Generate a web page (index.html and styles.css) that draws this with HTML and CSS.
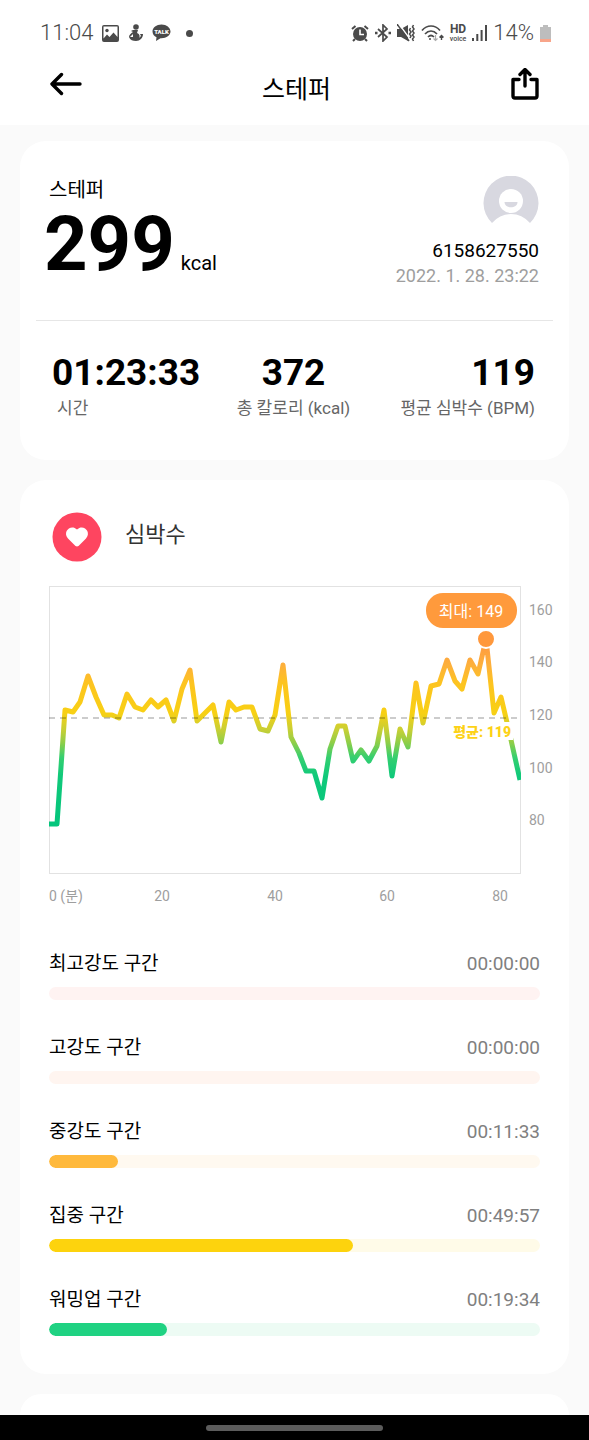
FILE: index.html
```html
<!DOCTYPE html>
<html lang="ko">
<head>
    <meta charset="UTF-8">
    <meta name="viewport" content="width=device-width, initial-scale=1.0">
    <title>스테퍼</title>
    <link rel="stylesheet" href="styles.css">
</head>
<body>
    <div class="top">
        <div class="status-bar">
            <div class="status-group">
                <span class="clock">11:04</span>
                <svg width="17" height="17" viewBox="0 0 17 17">
                    <path fill="#4a4a4a" fill-rule="evenodd" d="M2 0h13a2 2 0 0 1 2 2v13a2 2 0 0 1-2 2H2a2 2 0 0 1-2-2V2a2 2 0 0 1 2-2zM1.500 1.500v12l3.500-4 2.500 2.500 4-4.500 4 4.500V1.500z"/>
                    <circle cx="5" cy="5.500" r="1.700" fill="#4a4a4a"/>
                </svg>
                <svg width="15" height="18" viewBox="0 0 15 18" fill="#4a4a4a">
                    <circle cx="8" cy="3" r="2.800"/>
                    <path d="M5 6h5l-1 3c3 1 3 4 2 5l2-2-1-2 3 0c0 4-3 7-7 7-3 0-6-1-7-4 0-2 2-4 4-5l-2-1z"/>
                    <path d="M2 13l3-3v3z" fill="#fff"/>
                </svg>
                <svg width="19" height="18" viewBox="0 0 19 18">
                    <path fill="#4a4a4a" d="M9.500 0.500C4.500 0.500 0.500 3.500 0.500 7.500c0 2.500 1.600 4.600 4 5.800L4 17l4.500-2.800h1c5 0 9-3 9-6.700s-4-7-9-7z"/>
                    <text class="talk" x="9.500" y="9.500" text-anchor="middle">TALK</text>
                </svg>
                <span class="dot"></span>
            </div>
            <div class="status-group status-right">
                <svg width="18" height="17" viewBox="0 0 18 17">
                    <circle cx="9" cy="9" r="7" fill="#4a4a4a"/>
                    <path d="M1 4l3.500-3M17 4l-3.500-3M4 14l-2 2M14 14l2 2" stroke="#4a4a4a" stroke-width="2" fill="none"/>
                    <path d="M9 4.500V9.500h4" stroke="#fff" stroke-width="1.600" fill="none"/>
                </svg>
                <svg width="16" height="18" viewBox="0 0 16 18" fill="none" stroke="#4a4a4a" stroke-width="1.700">
                    <path d="M3 5l9 8-4 4V1l4 4-9 8"/>
                    <path d="M0 9h2.500M13.500 9H16" stroke-width="2.400"/>
                </svg>
                <svg width="18" height="18" viewBox="0 0 18 18">
                    <path d="M0 5h4l7-4v16l-7-4H0z" fill="#4a4a4a"/>
                    <path d="M2 0l11 15" stroke="#fff" stroke-width="1.300"/>
                    <path d="M0 0l12 17" stroke="#4a4a4a" stroke-width="1.500"/>
                    <path d="M13.500 4l-1 2 1.500 2-1.500 2 1.500 2-1 2M16.500 1l-1 2 1.500 2-1.500 2 1.500 2-1.500 2 1.500 2-1.500 2 1 2" stroke="#4a4a4a" stroke-width="1.500" fill="none"/>
                </svg>
                <svg width="23" height="17" viewBox="0 0 23 17" fill="none" stroke="#4a4a4a" stroke-width="1.700">
                    <path d="M1 5.500c5-6 13-6 18 0M4 9c3.500-4 8.500-4 12 0M7 12c2-2 4-2 6 0"/>
                    <circle cx="9" cy="14" r="1" fill="#4a4a4a" stroke="none"/>
                    <path d="M14.500 10v5M12.500 13.500l2 2 2-2" stroke="#aaa" stroke-width="1.200"/>
                    <path d="M20.500 15v-4M18.500 12.500l2-2 2 2" stroke-width="1.400"/>
                </svg>
                <span class="hd"><b>HD</b><small>voice</small></span>
                <svg width="15" height="16" viewBox="0 0 15 16" stroke="#4a4a4a" stroke-width="2">
                    <path d="M1 16v-3M5.300 16V9M9.600 16V5M14 16V0"/>
                </svg>
                <span class="clock">14%</span>
                <svg width="11" height="17" viewBox="0 0 11 17">
                    <path d="M3 0h5v2h3v15H0V2h3z" fill="#bdbdbd"/>
                    <path d="M0 14h11v3H0z" fill="#f8a58a"/>
                </svg>
            </div>
        </div>
        <header class="app-header">
            <button class="icon-btn" type="button" aria-label="뒤로">
                <svg width="32" height="24" viewBox="0 0 32 24" fill="none" stroke="#000" stroke-width="3.400" stroke-linecap="round" stroke-linejoin="round">
                    <path d="M11.500 2.500L2 12l9.500 9.500M2.500 12H30"/>
                </svg>
            </button>
            <h1>스테퍼</h1>
            <button class="icon-btn" type="button" aria-label="공유">
                <svg width="28" height="32" viewBox="0 0 28 32" fill="none" stroke="#000" stroke-width="3.400" stroke-linecap="round" stroke-linejoin="round">
                    <path d="M8 11.500H2v16.500a2 2 0 0 0 2 2h20a2 2 0 0 0 2-2V11.500H20M14 18V2M9 6.500l5-5 5 5"/>
                </svg>
            </button>
        </header>
    </div>

    <main>
        <section class="card">
            <div class="summary">
                <div>
                    <h2 class="summary-label">스테퍼</h2>
                    <p class="calories"><strong>299</strong><span>kcal</span></p>
                </div>
                <div class="user">
                    <svg width="56" height="47" viewBox="0 0 56 47">
                        <path fill="#d8d8e0" d="M9 47A27.500 27.500 0 1 1 47 47Q39 38 28 38T9 47z"/>
                        <circle cx="28" cy="25" r="12" fill="#fff"/>
                        <path fill="#d8d8e0" d="M21.500 26h13c0 7-13 7-13 0z"/>
                    </svg>
                    <p class="user-id">6158627550</p>
                    <p class="date">2022. 1. 28. 23:22</p>
                </div>
            </div>
            <dl class="metrics">
                <div>
                    <dd>01:23:33</dd>
                    <dt>시간</dt>
                </div>
                <div>
                    <dd>372</dd>
                    <dt>총 칼로리 (kcal)</dt>
                </div>
                <div>
                    <dd>119</dd>
                    <dt>평균 심박수 (BPM)</dt>
                </div>
            </dl>
        </section>

        <section class="card">
            <div class="section-head">
                <svg width="50" height="50" viewBox="0 0 50 50">
                    <circle cx="25" cy="25" r="24.500" fill="#fe4560"/>
                    <path fill="#fff" d="M25 34.500c-1 0-2-1-3-2l-6-6c-6-7 3-15 9-9 6-6 15 2 9 9l-6 6c-1 1-2 2-3 2z"/>
                </svg>
                <h2>심박수</h2>
            </div>

            <svg class="chart" viewBox="0 0 504 324" role="img" aria-label="심박수 그래프">
                <defs>
                    <linearGradient id="zone" gradientUnits="userSpaceOnUse" x1="0" y1="53" x2="0" y2="238">
                        <stop offset="0" stop-color="#ff9440"/>
                        <stop offset="0.140" stop-color="#fdb03c"/>
                        <stop offset="0.240" stop-color="#fdc420"/>
                        <stop offset="0.400" stop-color="#f8d014"/>
                        <stop offset="0.490" stop-color="#c8cf35"/>
                        <stop offset="0.560" stop-color="#8fce48"/>
                        <stop offset="0.640" stop-color="#35cf70"/>
                        <stop offset="0.740" stop-color="#10c97a"/>
                        <stop offset="1" stop-color="#04c57c"/>
                    </linearGradient>
                    <clipPath id="plot"><rect width="472" height="288"/></clipPath>
                </defs>
                <rect class="frame" x="0.500" y="0.500" width="471" height="287"/>
                <polyline class="pulse" clip-path="url(#plot)" stroke="url(#zone)" points="0,238 8,238 16,124 24,126 31,116 39,90 47,111 55,129 63,129 70,132 78,108 86,121 94,124 102,114 109,121 117,114 125,135 133,103 141,84 148,135 156,127 164,119 172,156 180,116 187,124 195,121 203,121 211,143 219,145 226,129 234,79 242,151 250,167 257,185 265,185 273,212 281,163 289,140 296,140 304,175 312,164 320,175 328,160 335,124 343,190 351,143 359,161 367,97 374,137 382,100 390,98 398,74 406,95 413,103 421,74 429,88 437,53 445,127 452,111 460,145 471,194"/>
                <path class="average" d="M0 132H471"/>
                <rect x="402" y="136" width="62" height="18" fill="#fff"/>
                <text class="average-label" x="462" y="151" text-anchor="end">평균: 119</text>
                <circle cx="437" cy="53" r="9" fill="#ff983c" stroke="#fff" stroke-width="2"/>
                <rect x="377" y="7" width="91" height="35" rx="17" fill="#ff9a3c"/>
                <text class="max-label" x="422" y="31" text-anchor="middle">최대: 149</text>
                <g class="axis">
                    <text x="480" y="29">160</text>
                    <text x="480" y="81">140</text>
                    <text x="480" y="134">120</text>
                    <text x="480" y="187">100</text>
                    <text x="480" y="239">80</text>
                    <text x="0" y="315">0 (분)</text>
                    <g text-anchor="middle">
                        <text x="113" y="315">20</text>
                        <text x="226" y="315">40</text>
                        <text x="338" y="315">60</text>
                        <text x="451" y="315">80</text>
                    </g>
                </g>
            </svg>

            <ul class="zones">
                <li class="zone zone-max">
                    <div class="zone-row"><span>최고강도 구간</span><time>00:00:00</time></div>
                    <div class="bar"><div class="fill" style="width: 0%"></div></div>
                </li>
                <li class="zone zone-high">
                    <div class="zone-row"><span>고강도 구간</span><time>00:00:00</time></div>
                    <div class="bar"><div class="fill" style="width: 0%"></div></div>
                </li>
                <li class="zone zone-mid">
                    <div class="zone-row"><span>중강도 구간</span><time>00:11:33</time></div>
                    <div class="bar"><div class="fill" style="width: 14%"></div></div>
                </li>
                <li class="zone zone-focus">
                    <div class="zone-row"><span>집중 구간</span><time>00:49:57</time></div>
                    <div class="bar"><div class="fill" style="width: 62%"></div></div>
                </li>
                <li class="zone zone-warm">
                    <div class="zone-row"><span>워밍업 구간</span><time>00:19:34</time></div>
                    <div class="bar"><div class="fill" style="width: 24%"></div></div>
                </li>
            </ul>
        </section>

        <section class="card card-next"></section>
    </main>

    <div class="nav-bar"><span class="nav-handle"></span></div>
</body>
</html>
```

FILE: styles.css
```css
:root {
    --page-bg: #fafafa;
    --card-bg: #ffffff;
    --text-color: #000000;
    --muted: #666666;
    --light: #9e9e9e;
    --icon: #4a4a4a;
}

* {
    box-sizing: border-box;
    margin: 0;
    padding: 0;
}

body {
    display: flex;
    flex-direction: column;
    min-height: 100vh;
    background-color: var(--page-bg);
    color: var(--text-color);
    font-family: Roboto, "Noto Sans CJK KR", sans-serif;
}

svg {
    display: block;
    flex-shrink: 0;
}

.top {
    background-color: var(--card-bg);
}

.status-bar {
    display: flex;
    justify-content: space-between;
    align-items: center;
    height: 66px;
    padding: 0 38px 0 40px;
}

.status-group {
    display: flex;
    align-items: center;
    gap: 9px;
}

.status-right {
    gap: 6px;
}

.clock {
    color: var(--icon);
    font-size: 22px;
    font-weight: 300;
    line-height: 26px;
}

.talk {
    fill: #ffffff;
    font-size: 6px;
    font-weight: 900;
}

.dot {
    width: 7px;
    height: 7px;
    margin-left: 6px;
    border-radius: 50%;
    background-color: var(--icon);
}

.hd {
    display: flex;
    flex-direction: column;
    align-items: center;
    color: var(--icon);
}

.hd b {
    font-size: 12px;
    line-height: 11px;
}

.hd small {
    font-size: 7px;
    font-weight: 500;
    line-height: 8px;
}

.app-header {
    display: flex;
    justify-content: space-between;
    align-items: flex-start;
    padding: 0 50px 11px;
}

.app-header h1 {
    font-size: 25px;
    font-weight: 400;
    line-height: 48px;
}

.icon-btn {
    display: flex;
    align-items: center;
    height: 35px;
    border: none;
    background: none;
    cursor: pointer;
}

main {
    display: flex;
    flex: 1;
    flex-direction: column;
    gap: 20px;
    padding: 16px 20px 0;
}

.card {
    border-radius: 26px;
    background-color: var(--card-bg);
}

.card-next {
    flex: 1;
    min-height: 21px;
    border-radius: 26px 26px 0 0;
}

.summary {
    display: flex;
    justify-content: space-between;
    margin: 0 16px;
    padding: 35px 14px 32px 8px;
    border-bottom: 1px solid #e6e6e6;
}

.summary-label {
    padding-left: 5px;
    font-size: 20px;
    font-weight: 400;
    line-height: 28px;
}

.calories {
    display: flex;
    align-items: baseline;
    gap: 6px;
    font-size: 20px;
    line-height: 24px;
}

.calories strong {
    font-size: 76px;
    font-weight: 700;
    line-height: 80px;
}

.user {
    display: flex;
    flex-direction: column;
    align-items: flex-end;
}

.user-id {
    margin-top: 15px;
    font-size: 19px;
    line-height: 26px;
}

.date {
    color: var(--light);
    font-size: 18px;
    line-height: 24px;
}

.metrics {
    display: grid;
    grid-template-columns: 1fr auto 1fr;
    padding: 30px 34px 39px 32px;
}

.metrics div {
    display: flex;
    flex-direction: column;
    align-items: center;
}

.metrics div:first-child {
    align-items: flex-start;
}

.metrics div:last-child {
    align-items: flex-end;
}

.metrics dd {
    font-size: 37px;
    font-weight: 700;
    line-height: 44px;
}

.metrics dt {
    color: var(--muted);
    font-size: 17px;
    line-height: 26px;
}

.metrics div:first-child dt {
    padding-left: 5px;
}

.section-head {
    display: flex;
    gap: 23px;
    padding: 32px 32px 24px;
}

.section-head h2 {
    color: #333333;
    font-size: 22px;
    font-weight: 400;
    line-height: 46px;
}

.chart {
    width: 100%;
    height: auto;
    padding: 0 16px 0 29px;
}

.frame {
    fill: none;
    stroke: #e2e2e2;
}

.pulse {
    fill: none;
    stroke-width: 5;
    stroke-linejoin: round;
}

.average {
    stroke: rgba(0, 0, 0, 0.2);
    stroke-width: 2;
    stroke-dasharray: 6 5;
}

.average-label {
    fill: #fdd217;
    font-size: 14px;
    font-weight: 900;
}

.max-label {
    fill: #ffffff;
    font-size: 16px;
}

.axis {
    fill: var(--light);
    font-size: 14px;
}

.zones {
    display: flex;
    flex-direction: column;
    gap: 34px;
    padding: 40px 29px 38px;
    list-style: none;
}

.zone-row {
    display: flex;
    justify-content: space-between;
    margin-bottom: 9px;
    font-size: 19px;
    line-height: 28px;
}

.zone-row time {
    color: #808080;
}

.bar {
    height: 13px;
    border-radius: 7px;
    overflow: hidden;
}

.fill {
    height: 100%;
    border-radius: 7px;
}

.zone-max .bar {
    background-color: #fff3f2;
}

.zone-high .bar {
    background-color: #fff5f0;
}

.zone-mid .bar {
    background-color: #fff9f0;
}

.zone-mid .fill {
    background-color: #ffb93c;
}

.zone-focus .bar {
    background-color: #fffbe8;
}

.zone-focus .fill {
    background-color: #fdd30d;
}

.zone-warm .bar {
    background-color: #edfbf4;
}

.zone-warm .fill {
    background-color: #1fd282;
}

.nav-bar {
    display: flex;
    justify-content: center;
    align-items: center;
    height: 25px;
    background-color: #000000;
}

.nav-handle {
    width: 30%;
    height: 6px;
    border-radius: 3px;
    background-color: #5c5c5c;
}
```
